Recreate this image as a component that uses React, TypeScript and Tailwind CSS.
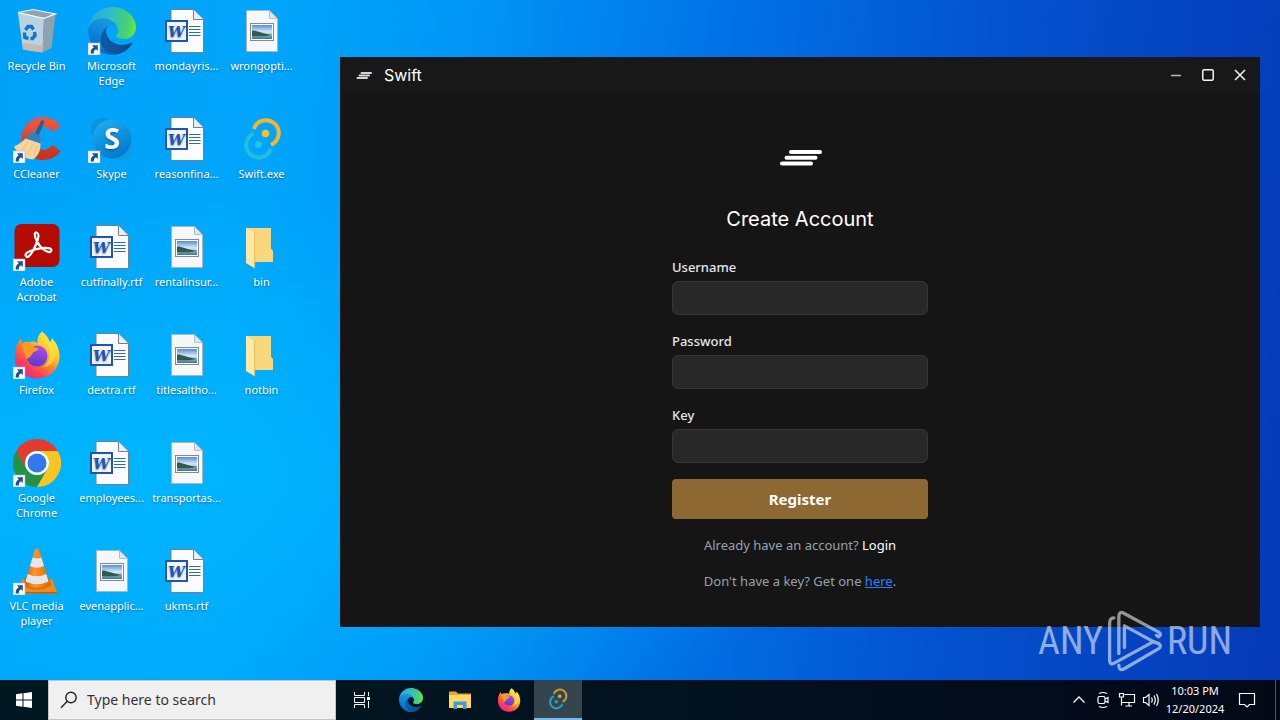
import { useId, useState } from "react";
import type { ReactNode } from "react";

function Shortcut() {
  return (
    <g>
      <rect x="0" y="36" width="12" height="12" fill="#f7f9fb" stroke="#a9bccb" strokeWidth="0.6" />
      <path d="M4 38.200h5.800v5.800l-1.800-1.700c-1.800 1-2.300 2.300-2.200 4.200H2.800c-.5-2.800.8-4.900 3-6.300z" fill="#1d4f91" />
    </g>
  );
}

function RecycleBin() {
  return (
    <svg viewBox="0 0 48 48" className="size-12" aria-hidden="true">
      <path d="M5 5.5 20 2.5 42.5 7 31 11.5z" fill="#8fa3ad" stroke="#e9f4fa" strokeWidth="1.2" />
      <path d="M5 6.5 31 11.5 29.5 45.5 10 42.5z" fill="#b9d3e3" />
      <path d="M31 11.5 42.5 7 38.5 41 29.5 45.5z" fill="#8fa2ad" />
      <path d="M9.4 36 29.8 38.5 29.5 45.5 10 42.5z" fill="#c9b9b4" />
      <path d="M5 6 31 11.5 42.5 7" fill="none" stroke="#eef8fd" strokeWidth="1.2" />
      <g fill="none" stroke="#1474c8" strokeWidth="3.4">
        <path d="M12.500 23 15 19.500H18.500L20.500 22.500" />
        <path d="M21.500 25 22 28.500 19.500 31.500H17.500" />
        <path d="M15.500 31.500 11.800 30.500 11.500 25.500" />
      </g>
    </svg>
  );
}

function EdgeLogo({ className, shortcut = false }: { className: string; shortcut?: boolean }) {
  const id = useId();
  return (
    <svg viewBox="0 0 48 48" className={className} aria-hidden="true">
      <defs>
        <linearGradient id={id + "a"} x1="0.2" y1="0.5" x2="1" y2="0.5">
          <stop offset="0" stopColor="#0c59a4" />
          <stop offset="1" stopColor="#114a8b" />
        </linearGradient>
        <linearGradient id={id + "b"} x1="0.6" y1="0" x2="0.3" y2="1">
          <stop offset="0" stopColor="#1b9de2" />
          <stop offset="0.6" stopColor="#0680d7" />
          <stop offset="1" stopColor="#0067bd" />
        </linearGradient>
        <linearGradient id={id + "c"} x1="0" y1="0.4" x2="1" y2="0.5">
          <stop offset="0" stopColor="#2aa8e0" />
          <stop offset="0.45" stopColor="#30bfc4" />
          <stop offset="0.8" stopColor="#45cf78" />
          <stop offset="1" stopColor="#66e83c" />
        </linearGradient>
      </defs>
      <g transform="scale(0.1875)">
        <path fill={`url(#${id}a)`} d="M231 190.5c-3.4 1.8-6.9 3.4-10.5 4.7a101.5 101.5 0 0 1-35.9 6.5c-47.3 0-88.5-32.5-88.5-74.3a31.5 31.5 0 0 1 16.4-27.3c-42.8 1.8-53.8 46.4-53.8 72.5 0 74 68.1 81.4 82.8 81.4 7.9 0 19.8-2.3 27-4.6l1.3-.4a128.3 128.3 0 0 0 66.6-52.8 4 4 0 0 0-5.4-5.7Z" />
        <path fill={`url(#${id}b)`} d="M105.7 241.4a79.2 79.2 0 0 1-22.7-21.3 80.7 80.7 0 0 1 29.5-120c3.2-1.5 8.5-4.1 15.6-4a32.4 32.4 0 0 1 25.7 13 31.9 31.9 0 0 1 6.3 18.7c0-.2 24.5-79.6-80-79.6-43.9 0-80 41.6-80 78.2a130.2 130.2 0 0 0 12.1 56 128 128 0 0 0 156.4 67 75.5 75.5 0 0 1-62.8-8Z" />
        <path fill={`url(#${id}c)`} d="M152.3 148.9c-.9 1-3.4 2.5-3.4 5.6 0 2.6 1.7 5.2 4.8 7.3 14.3 10 41.4 8.6 41.5 8.6a59.6 59.6 0 0 0 30.3-8.3 61.4 61.4 0 0 0 30.4-52.9c.3-22.4-8-37.3-11.3-43.9C223.5 23.9 177.7 0 128 0A128 128 0 0 0 0 126.2c.5-36.5 36.8-66 80-66 3.5 0 23.5.3 42 10a72.6 72.6 0 0 1 30.9 29.3c6.1 10.6 7.2 24.1 7.2 29.5s-2.7 13.3-7.8 19.9Z" />
      </g>
      {shortcut && <Shortcut />}
    </svg>
  );
}

function CCleaner() {
  const id = useId();
  return (
    <svg viewBox="0 0 48 48" className="size-12" aria-hidden="true">
      <defs>
        <linearGradient id={id} x1="0" y1="0" x2="0" y2="1">
          <stop offset="0" stopColor="#ef5540" />
          <stop offset="1" stopColor="#c9301f" />
        </linearGradient>
      </defs>
      <path d="M43.500 14A16.500 16.500 0 1 0 43.500 33" fill="none" stroke={`url(#${id})`} strokeWidth="10" />
      <path d="M28.500 5 31.500 6.500 25 22 21 20z" fill="#27618f" />
      <path d="M14 20.500C18 16.500 25 18 28 23l-1 6-14-5z" fill="#2f83b9" />
      <path d="M12.500 23.500 27.500 28.500C28 36 24 42 20 44.500 11 44 4 38 1 31.500 5 30 9 27 12.500 23.500z" fill="#f6d49c" />
      <path d="M15 27 9 35M20 29l-5 10M24 30l-3 11" stroke="#e3b679" strokeWidth="0.800" fill="none" />
      <Shortcut />
    </svg>
  );
}

function Skype() {
  const id = useId();
  return (
    <svg viewBox="0 0 48 48" className="size-12" aria-hidden="true">
      <defs>
        <linearGradient id={id} x1="0.2" y1="0" x2="0.7" y2="1">
          <stop offset="0" stopColor="#1aaef0" />
          <stop offset="1" stopColor="#0078cf" />
        </linearGradient>
      </defs>
      <circle cx="15" cy="15" r="12" fill="#0a94de" />
      <circle cx="33" cy="33" r="12" fill="#129be3" />
      <circle cx="24" cy="24" r="19.500" fill={`url(#${id})`} />
      <text x="24" y="34" textAnchor="middle" fontFamily="Noto Sans, sans-serif" fontWeight="700" fontSize="29" fill="#fff">S</text>
      <Shortcut />
    </svg>
  );
}

function Acrobat() {
  return (
    <svg viewBox="0 0 48 48" className="size-12" aria-hidden="true">
      <rect x="1.500" y="1" width="45" height="43" rx="7" fill="#b30b00" />
      <path d="M13 33.200C10.500 29.500 20 26.500 29 25.200 37 24.300 39.500 26.200 38 28.200 35.500 31 27 25.500 23.300 17 20.500 10.500 22 9 24 9.700 27.500 11 24 20.500 19.500 28.500 16 34.500 13.800 34.800 13 33.200z" fill="none" stroke="#fff" strokeWidth="2.200" strokeLinejoin="round" />
      <Shortcut />
    </svg>
  );
}

function FirefoxLogo({ className, shortcut = false }: { className: string; shortcut?: boolean }) {
  const id = useId();
  return (
    <svg viewBox="0 0 48 48" className={className} aria-hidden="true">
      <defs>
        <linearGradient id={id + "a"} x1="0.85" y1="0.1" x2="0.2" y2="0.95">
          <stop offset="0" stopColor="#fff04a" />
          <stop offset="0.3" stopColor="#ffc42b" />
          <stop offset="0.55" stopColor="#ff7a2e" />
          <stop offset="0.8" stopColor="#ff3a5c" />
          <stop offset="1" stopColor="#e6238e" />
        </linearGradient>
        <linearGradient id={id + "b"} x1="0.6" y1="0" x2="0.4" y2="1">
          <stop offset="0" stopColor="#b348e6" />
          <stop offset="1" stopColor="#5a3ad0" />
        </linearGradient>
      </defs>
      <path fill={`url(#${id}a)`} d="M29 .5C33 3 35.500 7 36.500 10.500 38.500 10.500 38.800 8.500 38.600 7 43.500 11.500 46.500 18 46.500 25 46.500 38 36.500 47.500 24 47.500S1.800 38 1.800 25.500C1.800 18 4 12 8 7.500 8 10 8.500 11.500 9.500 12.500 11.500 11 14 10.500 16.500 11 19.500 10 22.500 10.500 24.500 12 24 7.500 25.500 3.500 29 .5z" />
      <circle cx="24" cy="25" r="10.500" fill={`url(#${id}b)`} />
      <path d="M9.500 12.500C13 9.500 18 10.500 19.500 15 22 17.500 25 16.500 25.500 18 25 20.500 20 20 19.500 22.500 18.500 25 16 26.500 14 28 12 26 11.500 25 12 23.500 10.500 20 8.500 18.500 9.500 12.500z" fill="#ff9a23" />
      <path d="M29 .5C28 7 32 10 35 15c4 8 1.500 17-5.500 21.500C39.500 35 44 27 41.500 18.500 39 11 31 8 29 .5z" fill="#ffdf3c" opacity="0.750" />
      {shortcut && <Shortcut />}
    </svg>
  );
}

function Chrome() {
  const sector = "M3.200 12A24 24 0 0 1 44.800 12H24A12 12 0 0 0 13.600 30z";
  return (
    <svg viewBox="0 0 48 48" className="size-12" aria-hidden="true">
      <path d={sector} fill="#249143" transform="rotate(240 24 24)" />
      <path d={sector} fill="#fcc41f" transform="rotate(120 24 24)" />
      <path d={sector} fill="#e33b2e" />
      <circle cx="24" cy="24" r="12" fill="#fff" />
      <circle cx="24" cy="24" r="9.500" fill="#3478ee" />
      <Shortcut />
    </svg>
  );
}

function Vlc() {
  const id = useId();
  return (
    <svg viewBox="0 0 48 48" className="size-12" aria-hidden="true">
      <defs>
        <linearGradient id={id}>
          <stop offset="0" stopColor="#d95b00" />
          <stop offset="0.4" stopColor="#ff9428" />
          <stop offset="1" stopColor="#e86a00" />
        </linearGradient>
      </defs>
      <path d="M9.500 32 39 32 44.500 46.500H4z" fill="#f08a1c" />
      <path d="M4 45h40.500v1.500H4z" fill="#c65f00" />
      <path d="M9.500 38Q24 47 38.500 38L36 31H12z" fill="#b85200" opacity="0.500" />
      <path d="M22 2.500Q24 0 26 2.500L36.500 37C33 42 15 42 11.500 37z" fill={`url(#${id})`} />
      <path d="M19.600 10.500Q24 12.700 28.400 10.500L31 19Q24 22.500 17 19z" fill="#e4e6e8" />
      <path d="M14.700 27Q24 31.500 33.300 27L35.500 34.500Q24 40 12.500 34.500z" fill="#e4e6e8" />
      <Shortcut />
    </svg>
  );
}

function WordFile() {
  return (
    <svg viewBox="0 0 48 48" className="size-12" aria-hidden="true">
      <path d="M8 2.500H30.500L40.500 12.500V45.500H8z" fill="#fbfcfe" stroke="#71808c" strokeWidth="1" />
      <path d="M30.500 2.500V12.500H40.500" fill="#e8eef4" stroke="#71808c" strokeWidth="1" />
      <path d="M26 19.500H37.500M26 22.500H37.500M26 25.500H37.500M26 28.500H37.500" stroke="#3568b4" strokeWidth="1" />
      <rect x="3" y="14" width="21" height="20" fill="#f2f6fc" stroke="#1f55b0" strokeWidth="2" />
      <text x="13.500" y="29.500" textAnchor="middle" fontFamily="DejaVu Serif, serif" fontStyle="italic" fontWeight="700" fontSize="15" fill="#1f55b0">W</text>
    </svg>
  );
}

function ImageFile() {
  const id = useId();
  return (
    <svg viewBox="0 0 48 48" className="size-12" aria-hidden="true">
      <defs>
        <linearGradient id={id} x1="0" y1="0" x2="0" y2="1">
          <stop offset="0" stopColor="#4f8fd6" />
          <stop offset="0.5" stopColor="#dcebf5" />
          <stop offset="0.7" stopColor="#8fb6cc" />
          <stop offset="1" stopColor="#3d7396" />
        </linearGradient>
      </defs>
      <path d="M8.500 3.500H31.500L39.500 11.500V44.500H8.500z" fill="#f6f7f8" stroke="#a9b4bc" strokeWidth="1" />
      <path d="M31.500 3.500V11.500H39.500z" fill="#dfe5e9" stroke="#a9b4bc" strokeWidth="0.800" />
      <rect x="12.500" y="16.500" width="23" height="17" fill="#fff" stroke="#7b8a96" strokeWidth="1" />
      <rect x="14" y="18" width="20" height="14" fill={`url(#${id})`} />
      <path d="M14 23.500C18 23 22 26 34 28 28 29.500 20 29.500 14 29z" fill="#2d5b4d" />
    </svg>
  );
}

function Folder() {
  return (
    <svg viewBox="0 0 48 48" className="size-12" aria-hidden="true">
      <path d="M8 5H33V25.500L35 28V39H10z" fill="#f9d77c" />
      <path d="M8 5 16.700 9.500V45.300L8 40z" fill="#ffe8a4" />
      <path d="M16.700 9.500V45.300" stroke="#e3b44e" strokeWidth="0.800" />
    </svg>
  );
}

function LoopLogo({ className }: { className: string }) {
  return (
    <svg viewBox="0 0 48 48" className={className} aria-hidden="true">
      <path d="M15.800 14A12.800 12.800 0 1 1 33 29.800" fill="none" stroke="#f4b62c" strokeWidth="4" />
      <circle cx="27.500" cy="18.500" r="3.800" fill="#ffbe28" />
      <path d="M15.500 18.500A12.600 12.600 0 1 0 32.800 34" fill="none" stroke="#25bddb" strokeWidth="4" />
      <circle cx="20.500" cy="29.500" r="3.500" fill="#25c3dc" />
    </svg>
  );
}

function SwiftMark({ className }: { className: string }) {
  return (
    <svg viewBox="0 0 64 64" className={className} aria-hidden="true">
      <g stroke="currentColor" strokeWidth="4" strokeLinecap="round">
        <path d="M23 27H52" />
        <path d="M18.500 32.800H47.500" />
        <path d="M14 38.500H43" />
      </g>
    </svg>
  );
}

type Item = { label: string; icon: ReactNode };

const columns: Item[][] = [
  [
    { label: "Recycle Bin", icon: <RecycleBin /> },
    { label: "CCleaner", icon: <CCleaner /> },
    { label: "Adobe Acrobat", icon: <Acrobat /> },
    { label: "Firefox", icon: <FirefoxLogo className="size-12" shortcut /> },
    { label: "Google Chrome", icon: <Chrome /> },
    { label: "VLC media player", icon: <Vlc /> },
  ],
  [
    { label: "Microsoft Edge", icon: <EdgeLogo className="size-12" shortcut /> },
    { label: "Skype", icon: <Skype /> },
    { label: "cutfinally.rtf", icon: <WordFile /> },
    { label: "dextra.rtf", icon: <WordFile /> },
    { label: "employees...", icon: <WordFile /> },
    { label: "evenapplic...", icon: <ImageFile /> },
  ],
  [
    { label: "mondayris...", icon: <WordFile /> },
    { label: "reasonfina...", icon: <WordFile /> },
    { label: "rentalinsur...", icon: <ImageFile /> },
    { label: "titlesaltho...", icon: <ImageFile /> },
    { label: "transportas...", icon: <ImageFile /> },
    { label: "ukms.rtf", icon: <WordFile /> },
  ],
  [
    { label: "wrongopti...", icon: <ImageFile /> },
    { label: "Swift.exe", icon: <LoopLogo className="size-12" /> },
    { label: "bin", icon: <Folder /> },
    { label: "notbin", icon: <Folder /> },
  ],
];

function DesktopIcons() {
  return (
    <div className="-ml-px flex pt-[7px]">
      {columns.map((items, c) => (
        <div key={c} className="flex w-[75px] flex-col">
          {items.map((item) => (
            <button key={item.label} type="button" className="flex h-[108px] flex-col items-center gap-[3px] text-[11px] leading-[15px] text-white [text-shadow:0_1px_2px_rgba(0,30,70,0.5)]">
              {item.icon}
              <span className="px-2">{item.label}</span>
            </button>
          ))}
        </div>
      ))}
    </div>
  );
}

function Field({ id, label, type = "text" }: { id: string; label: string; type?: string }) {
  const [value, setValue] = useState("");
  return (
    <div className="flex flex-col gap-1">
      <label htmlFor={id} className="text-[13px] font-medium leading-5 text-gray-200">{label}</label>
      <input
        id={id}
        type={type}
        value={value}
        onChange={(e) => setValue(e.target.value)}
        className="h-[34px] w-full rounded-md border border-[#363636] bg-[#282828] px-3 text-[13px] text-white outline-none"
      />
    </div>
  );
}

function AppWindow() {
  return (
    <section className="absolute bottom-[53px] left-[340px] right-5 top-[57px] flex flex-col overflow-hidden bg-[#151515] text-white">
      <header className="flex h-9 items-center bg-[#181818] pl-4 pr-1">
        <svg viewBox="0 0 16 16" className="size-4 text-gray-300" aria-hidden="true">
          <path d="M5.500 6H15M3.500 8.500H13M1.500 11H11" stroke="currentColor" strokeWidth="2" strokeLinecap="round" />
        </svg>
        <h1 className="ml-3 font-[Inter,sans-serif] text-base">Swift</h1>
        <div className="ml-auto flex">
          <button type="button" aria-label="Minimize" className="flex h-9 w-8 items-center justify-center">
            <svg viewBox="0 0 16 16" className="size-4" aria-hidden="true"><path d="M3 8.500H13" stroke="#b8b8b8" strokeWidth="1.500" /></svg>
          </button>
          <button type="button" aria-label="Maximize" className="flex h-9 w-8 items-center justify-center">
            <svg viewBox="0 0 16 16" className="size-4" aria-hidden="true"><rect x="2.750" y="2.750" width="10.500" height="10.500" rx="1.500" fill="none" stroke="#f4f4f4" strokeWidth="1.500" /></svg>
          </button>
          <button type="button" aria-label="Close" className="flex h-9 w-8 items-center justify-center">
            <svg viewBox="0 0 16 16" className="size-4" aria-hidden="true"><path d="M3 3 13 13M13 3 3 13" stroke="#f4f4f4" strokeWidth="1.500" /></svg>
          </button>
        </div>
      </header>
      <form className="mx-auto flex w-64 flex-col gap-4 pt-8" onSubmit={(e) => e.preventDefault()}>
        <SwiftMark className="size-16 self-center" />
        <h2 className="mb-2 text-center font-[Inter,sans-serif] text-xl leading-7">Create Account</h2>
        <Field id="username" label="Username" />
        <Field id="password" label="Password" type="password" />
        <Field id="key" label="Key" />
        <button type="submit" className="h-10 rounded bg-[#8d6832] text-[15px] font-bold">Register</button>
        <p className="whitespace-nowrap text-center text-[13px] leading-5 text-gray-400">
          Already have an account? <a href="#login" className="text-white">Login</a>
        </p>
        <p className="whitespace-nowrap text-center text-[13px] leading-5 text-gray-400">
          Don't have a key? Get one <a href="#key" className="text-blue-500 underline">here</a>.
        </p>
      </form>
    </section>
  );
}

function Watermark() {
  return (
    <div className="pointer-events-none absolute bottom-2 right-12 flex items-center gap-1 font-['Roboto_Condensed','Liberation_Sans_Narrow',sans-serif] text-[38px] leading-[62px] text-white opacity-55">
      <span>ANY</span>
      <svg viewBox="268 28 168 188" className="h-[62px] w-14" fill="none" stroke="currentColor" strokeWidth="10" strokeLinecap="round" strokeLinejoin="round" aria-hidden="true">
        <path d="M303 160V48Q303 30 318 38L424 95Q434 102 424 109L417 105" />
        <path d="M288 52Q275 53 275 68V180Q275 196 289 189L408 124 320 76V142" />
        <path d="M303 195Q303 214 318 207L424 145Q434 138 424 130L408 124" />
      </svg>
      <span>RUN</span>
    </div>
  );
}

function TaskButton({ label, children, active = false }: { label: string; children: ReactNode; active?: boolean }) {
  return (
    <button
      type="button"
      aria-label={label}
      className={active ? "flex h-10 w-12 items-center justify-center border-b-2 border-[#76b9ed] bg-[#35454f]" : "flex h-10 w-12 items-center justify-center"}
    >
      {children}
    </button>
  );
}

function Taskbar() {
  return (
    <footer className="flex h-10 shrink-0 items-center bg-linear-to-r from-[#001822] via-[#02121f] to-[#030817] text-white">
      <TaskButton label="Start">
        <svg viewBox="0 0 16 16" className="size-4" fill="#fff" aria-hidden="true">
          <path d="M0 2.200 6.500 1.300V7.500H0zM7.500 1.200 16 0V7.500H7.500zM0 8.500H6.500V14.700L0 13.800zM7.500 8.500H16V16L7.500 14.800z" />
        </svg>
      </TaskButton>
      <label className="flex h-10 w-72 items-center gap-2 border border-[#c4c4c4] bg-[#f0f0f0] pl-2.5">
        <svg viewBox="0 0 20 20" className="size-5" fill="none" stroke="#222" strokeWidth="1.400" aria-hidden="true">
          <circle cx="12" cy="7.500" r="5.200" />
          <path d="M8.300 11.300 2 17.800" />
        </svg>
        <input type="search" aria-label="Type here to search" placeholder="Type here to search" className="min-w-0 flex-1 bg-transparent text-sm text-black outline-none placeholder:text-[#333]" />
      </label>
      <div className="flex gap-px pl-0.5">
        <TaskButton label="Task View">
          <svg viewBox="0 0 18 18" className="size-[18px]" fill="none" stroke="#fff" strokeWidth="1" aria-hidden="true">
            <path d="M1.500 1V4.500H11.500V1M1.500 17V13.500H11.500V17M1.500 6.500H11.500V11.500H1.500zM15.500 1V5M15.500 10V17" />
            <path d="M14 6h3v3h-3z" fill="#fff" stroke="none" />
          </svg>
        </TaskButton>
        <TaskButton label="Microsoft Edge"><EdgeLogo className="size-6" /></TaskButton>
        <TaskButton label="File Explorer">
          <svg viewBox="0 0 24 24" className="size-6" aria-hidden="true">
            <path d="M1 3.500H8L10 5.500H23V20H1z" fill="#e9a52c" />
            <path d="M1 7H23V20H1z" fill="#ffd868" />
            <path d="M5.500 21V13.500H18.500V21H15V17H9V21z" fill="#3b9ce0" />
          </svg>
        </TaskButton>
        <TaskButton label="Firefox"><FirefoxLogo className="size-6" /></TaskButton>
        <TaskButton label="Swift" active><span className="opacity-75"><LoopLogo className="size-6" /></span></TaskButton>
      </div>
      <div className="ml-auto flex items-center">
        <button type="button" aria-label="Show hidden icons" className="flex h-10 w-6 items-center justify-center">
          <svg viewBox="0 0 16 16" className="size-4" fill="none" stroke="#fff" strokeWidth="1.300" aria-hidden="true"><path d="M2.500 10.500 8 5l5.500 5.500" /></svg>
        </button>
        <button type="button" aria-label="Camera" className="flex h-10 w-6 items-center justify-center">
          <svg viewBox="0 0 16 18" className="h-[18px] w-4" fill="none" stroke="#fff" strokeWidth="1.200" aria-hidden="true">
            <rect x="3" y="5.500" width="7" height="7" rx="1.500" />
            <path d="M10 8 13 6.500V11.500L10 10M4 2.500Q8 .5 12 2.500M4 15.500Q8 17.500 12 15.500" />
          </svg>
        </button>
        <button type="button" aria-label="Network" className="flex h-10 w-6 items-center justify-center">
          <svg viewBox="0 0 18 16" className="h-4 w-[18px]" fill="none" stroke="#fff" strokeWidth="1.200" aria-hidden="true">
            <path d="M6.500 2.500H16.500V10.500H4M11 10.500V13.500M7.500 14H14M1.500 1.500H5.500V5H1.500zM3.500 5V13.500" />
          </svg>
        </button>
        <button type="button" aria-label="Volume" className="flex h-10 w-6 items-center justify-center">
          <svg viewBox="0 0 18 16" className="h-4 w-[18px]" fill="none" stroke="#fff" strokeWidth="1.200" aria-hidden="true">
            <path d="M1.500 5.500H3.500L7 2.500V13.500L3.500 10.500H1.500zM9.500 5.500Q11 8 9.500 10.500M12 3.500Q14.500 8 12 12.500M14.500 2Q18 8 14.500 14" />
          </svg>
        </button>
        <div className="flex w-16 flex-col items-center whitespace-nowrap text-[11px] leading-[18px]">
          <time>10:03 PM</time>
          <time>12/20/2024</time>
        </div>
        <button type="button" aria-label="Notifications" className="flex h-10 w-10 items-center justify-center">
          <svg viewBox="0 0 18 18" className="size-[18px]" fill="none" stroke="#fff" strokeWidth="1.200" aria-hidden="true"><path d="M1.500 2.500H16.500V13.500H11.500L9 16 6.500 13.500H1.500z" /></svg>
        </button>
        <button type="button" aria-label="Show desktop" className="ml-2 h-10 w-[5px] border-l border-[#4b5560]" />
      </div>
    </footer>
  );
}

export default function App() {
  return (
    <div className="flex h-screen flex-col overflow-hidden font-['Noto_Sans',sans-serif]">
      <main className="relative min-h-0 flex-1 bg-[radial-gradient(ellipse_at_10%_70%,rgba(0,184,255,0.85),transparent_45%),linear-gradient(96deg,#00a2f8_0%,#00a6fb_20%,#0094f5_36%,#0076e8_52%,#0352cf_74%,#0539b6_100%)]">
        <DesktopIcons />
        <AppWindow />
        <Watermark />
      </main>
      <Taskbar />
    </div>
  );
}
